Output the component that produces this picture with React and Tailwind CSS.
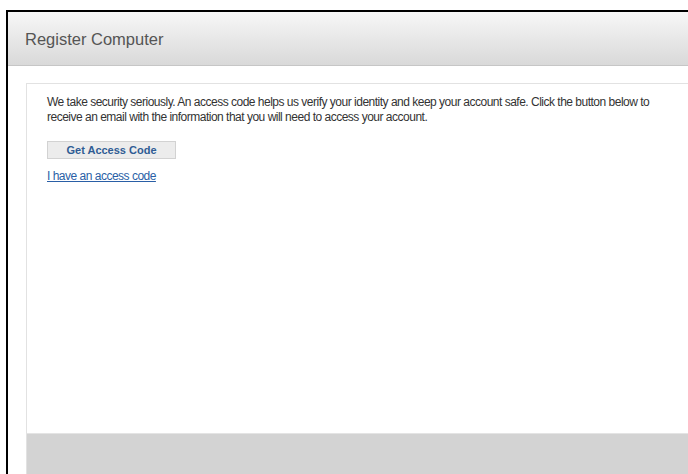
import React from "react"

const RegisterComputer = () => {
	return (
		<div className="w-[688px] h-[474px] overflow-hidden bg-white" style={{ fontFamily: '"Liberation Sans", Arial, sans-serif' }}>
			<div className="ml-[6px] mt-[10px] h-[464px] border-l-2 border-t-2 border-black flex flex-col">
				{/* Page header */}
				<div className="h-[54px] shrink-0 flex items-center px-[17px] bg-gradient-to-b from-[#f7f7f7] to-[#d9d9d9] border-b border-[#c6c6c6]">
					<h1 className="text-[16.5px] text-[#555555] pt-[1px]">Register Computer</h1>
				</div>

				{/* Content card */}
				<div className="flex-1 flex flex-col pl-[18px] pt-[17px]">
					<div className="flex-1 border-l border-t border-[#e2e2e2] pl-[20px] pt-[11px]">
						<p className="w-[620px] text-[12px] leading-[15px] tracking-[-0.5px] text-[#333333]">
							We take security seriously. An access code helps us verify your identity and keep your account safe. Click the button below to receive an email with the information that you will need to access your account.
						</p>
						<button className="block mt-[16px] w-[129px] h-[18px] bg-[#ececec] border border-[#d2d2d2] text-[11px] font-bold text-[#2f5c94] leading-none">
							Get Access Code
						</button>
						<div className="mt-[7px] leading-[18px]">
							<a href="#" className="text-[12px] tracking-[-0.5px] text-[#2a5fa6] underline">I have an access code</a>
						</div>
					</div>
					<div className="h-[41px] shrink-0 bg-[#d3d3d3] border-t border-[#e4e4e4] border-l border-l-[#e2e2e2]" />
				</div>
			</div>
		</div>
	)
}

export default RegisterComputer
